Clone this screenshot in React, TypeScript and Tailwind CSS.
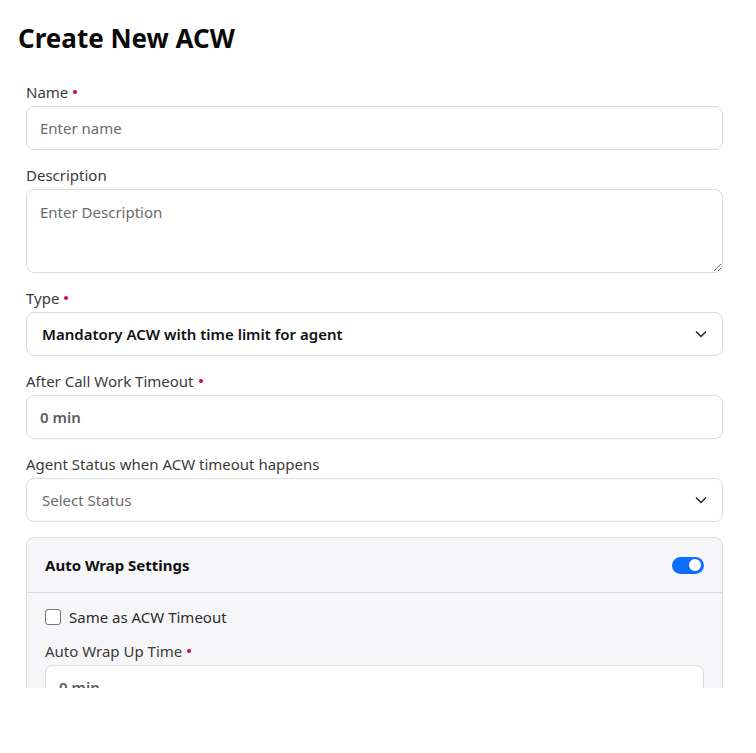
import React from 'react';

const font = { fontFamily: '"Noto Sans", "Open Sans", sans-serif' };

const Label = ({ text, required }: { text: string; required?: boolean }) => (
  <label className="flex items-center h-5 mb-1 text-[15px] text-[#3b3b3b]">
    {text}
    {required && <span className="ml-[5px] w-[4px] h-[4px] rounded-full bg-[#d1005a]" />}
  </label>
);

const Chevron = () => (
  <svg width="12" height="8" viewBox="0 0 12 8" className="shrink-0">
    <path d="M1 1.5 L6 6.5 L11 1.5" fill="none" stroke="#222" strokeWidth="1.5" />
  </svg>
);

const Select = ({ value, placeholder }: { value?: string; placeholder?: string }) => (
  <div className="h-11 flex items-center justify-between px-[15px] bg-white border border-[#dcdcdc] rounded-lg">
    {value ? (
      <span className="text-[15px] font-semibold text-[#111]">{value}</span>
    ) : (
      <span className="text-[15px] text-[#6c6c6c]">{placeholder}</span>
    )}
    <Chevron />
  </div>
);

export default function App() {
  return (
    <div className="h-[688px] overflow-hidden bg-white pl-[18px] pr-[25px]" style={font}>
      <h1 className="pt-[20px] h-[82px] text-[26px] leading-[36px] font-bold text-[#0a0a0a]">Create New ACW</h1>
      <form className="px-2 flex flex-col gap-[15px]">
        <div>
          <Label text="Name" required />
          <input
            type="text"
            placeholder="Enter name"
            className="w-full h-11 px-[13px] text-[15px] bg-white border border-[#dcdcdc] rounded-lg placeholder:text-[#6c6c6c] focus:outline-none"
          />
        </div>
        <div>
          <Label text="Description" />
          <textarea
            placeholder="Enter Description"
            className="block w-full h-[84px] px-[13px] py-[11px] text-[15px] bg-white border border-[#dcdcdc] rounded-lg placeholder:text-[#6c6c6c] focus:outline-none"
          />
        </div>
        <div>
          <Label text="Type" required />
          <Select value="Mandatory ACW with time limit for agent" />
        </div>
        <div>
          <Label text="After Call Work Timeout" required />
          <input
            type="text"
            placeholder="0 min"
            className="w-full h-11 px-[13px] text-[15px] font-semibold bg-white border border-[#dcdcdc] rounded-lg placeholder:text-[#5c5c5c] focus:outline-none"
          />
        </div>
        <div>
          <Label text="Agent Status when ACW timeout happens" />
          <Select placeholder="Select Status" />
        </div>
        <div className="border border-[#dcdcdc] rounded-lg bg-[#f6f6f8]">
          <div className="h-[55px] flex items-center justify-between px-[18px] border-b border-[#dcdcdc]">
            <span className="text-[15px] font-bold text-[#111]">Auto Wrap Settings</span>
            <span className="w-8 h-[17px] rounded-full bg-[#0d6efd] flex items-center justify-end px-[3px]">
              <span className="w-[12px] h-[12px] rounded-full bg-white" />
            </span>
          </div>
          <div className="px-[18px] pt-[15px]">
            <label className="flex items-center gap-2 h-[18px] text-[15px] text-[#2b2b2b]">
              <span className="w-4 h-4 rounded-[3px] border border-[#767676] bg-white" />
              Same as ACW Timeout
            </label>
            <div className="mt-[15px]">
              <Label text="Auto Wrap Up Time" required />
              <input
                type="text"
                placeholder="0 min"
                className="w-full h-11 px-[13px] text-[15px] font-semibold bg-white border border-[#dcdcdc] rounded-lg placeholder:text-[#5c5c5c] focus:outline-none"
              />
            </div>
          </div>
        </div>
      </form>
    </div>
  );
}
